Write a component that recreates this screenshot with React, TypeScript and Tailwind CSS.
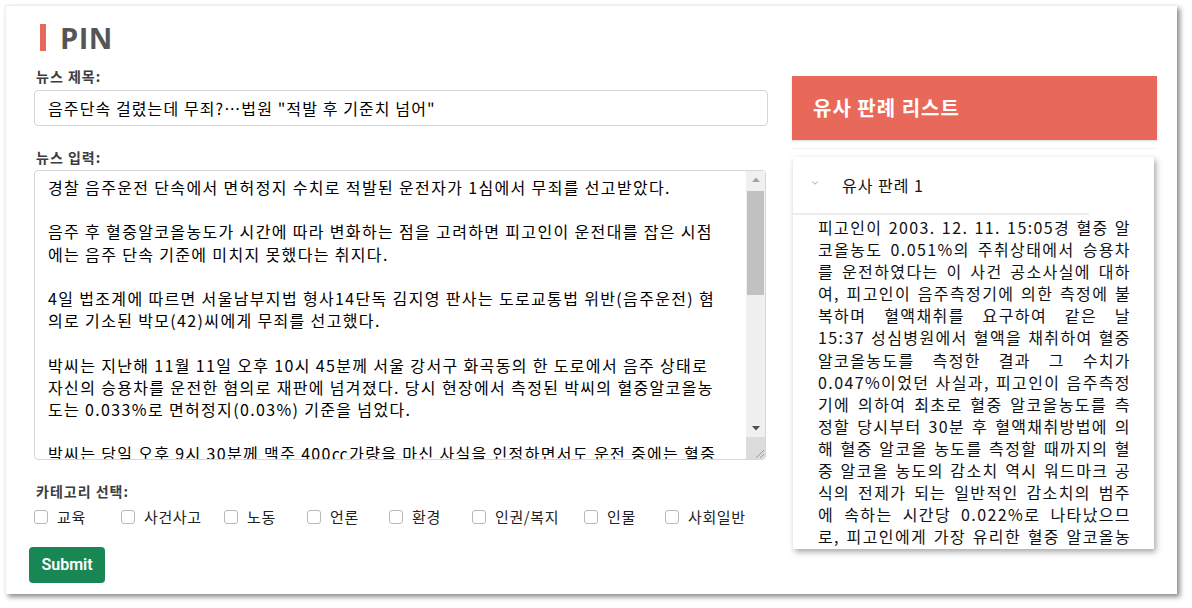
import { ChevronDown } from "lucide-react";

const NEWS_TITLE = '음주단속 걸렸는데 무죄?…법원 "적발 후 기준치 넘어"';

// line breaks kept where the article wraps in the editor
const NEWS_BODY = [
  "경찰 음주운전 단속에서 면허정지 수치로 적발된 운전자가 1심에서 무죄를 선고받았다.",
  "",
  "음주 후 혈중알코올농도가 시간에 따라 변화하는 점을 고려하면 피고인이 운전대를 잡은 시점",
  "에는 음주 단속 기준에 미치지 못했다는 취지다.",
  "",
  "4일 법조계에 따르면 서울남부지법 형사14단독 김지영 판사는 도로교통법 위반(음주운전) 혐",
  "의로 기소된 박모(42)씨에게 무죄를 선고했다.",
  "",
  "박씨는 지난해 11월 11일 오후 10시 45분께 서울 강서구 화곡동의 한 도로에서 음주 상태로",
  "자신의 승용차를 운전한 혐의로 재판에 넘겨졌다. 당시 현장에서 측정된 박씨의 혈중알코올농",
  "도는 0.033%로 면허정지(0.03%) 기준을 넘었다.",
  "",
  "박씨는 당일 오후 9시 30분께 맥주 400㏄가량을 마신 사실을 인정하면서도 운전 중에는 혈중",
  "알코올농도가 상승하는 중이었기 때문에 실제 운전 당시에는 기준치를 넘지 않았다고 주장했다.",
].join("\n");

const CASE_TEXT =
  "피고인이 2003. 12. 11. 15:05경 혈중 알코올농도 0.051%의 주취상태에서 승용차를 운전하였다는 이 사건 공소사실에 대하여, 피고인이 음주측정기에 의한 측정에 불복하며 혈액채취를 요구하여 같은 날 15:37 성심병원에서 혈액을 채취하여 혈중 알코올농도를 측정한 결과 그 수치가 0.047%이었던 사실과, 피고인이 음주측정기에 의하여 최초로 혈중 알코올농도를 측정할 당시부터 30분 후 혈액채취방법에 의해 혈중 알코올 농도를 측정할 때까지의 혈중 알코올 농도의 감소치 역시 워드마크 공식의 전제가 되는 일반적인 감소치의 범주에 속하는 시간당 0.022%로 나타났으므로, 피고인에게 가장 유리한 혈중 알코올농도는 0.051%에서 시간당 감소치를 적용하여 산출하여야 한다.";

const CATEGORIES = [
  { name: "교육", w: "w-[87px]" },
  { name: "사건사고", w: "w-[103px]" },
  { name: "노동", w: "w-[83px]" },
  { name: "언론", w: "w-[82px]" },
  { name: "환경", w: "w-[83px]" },
  { name: "인권/복지", w: "w-[112px]" },
  { name: "인물", w: "w-[81px]" },
  { name: "사회일반", w: "w-[90px]" },
];

// classic scrollbar look drawn over the textarea (the screenshot browser hides real ones)
function FakeScrollbar() {
  return (
    <div className="absolute top-[1px] right-[1px] bottom-[1px] w-[19px] bg-[#f0f0f0] flex flex-col pointer-events-none">
      <div className="h-[17px] flex items-center justify-center">
        <svg width="8" height="5" viewBox="0 0 8 5">
          <polygon points="0,5 4,0.5 8,5" fill="#a3a3a3" />
        </svg>
      </div>
      <div className="mt-[3px] mx-[1px] h-[104px] bg-[#c1c1c1]" />
      <div className="flex-1" />
      <div className="h-[17px] flex items-center justify-center">
        <svg width="8" height="5" viewBox="0 0 8 5">
          <polygon points="0,0 8,0 4,4.5" fill="#505050" />
        </svg>
      </div>
      <div className="h-[22px] bg-[#dcdcdc] flex items-end justify-end">
        <svg width="11" height="11" viewBox="0 0 11 11">
          <line x1="2" y1="10" x2="10" y2="2" stroke="#9a9a9a" strokeWidth="1" />
          <line x1="6" y1="10" x2="10" y2="6" stroke="#9a9a9a" strokeWidth="1" />
        </svg>
      </div>
    </div>
  );
}

export default function App() {
  return (
    <div className="min-h-screen bg-white p-[5px] font-['Noto_Sans_CJK_KR','Noto_Sans',sans-serif]">
      <div className="w-[1172px] h-[589px] bg-white border-t border-l border-[#eeeeee] shadow-[3px_3px_5px_rgba(0,0,0,0.45)] pl-[23px] pr-[20px] pt-[14px] flex gap-[24px]">
        {/* left: form */}
        <div className="w-[739px] flex flex-col">
          <div className="flex items-center h-[34px] ml-[11px]">
            <div className="w-[6px] h-[27px] bg-[#e8695a]" />
            <h1 className="ml-[14px] text-[29px] leading-none font-bold text-[#555555] font-['Open_Sans',sans-serif] tracking-[0.5px]">
              PIN
            </h1>
          </div>

          <label className="mt-[13px] ml-[7px] text-[14px] leading-[18px] font-bold tracking-[1px] text-[#3d3d3d]">
            뉴스 제목:
          </label>
          <input
            className="mt-[5px] ml-[5px] w-[734px] h-[36px] rounded-[4px] border border-[#d3d6da] px-[13px] text-[16px] tracking-[1.1px] text-black outline-none"
            defaultValue={NEWS_TITLE}
            readOnly
          />

          <label className="mt-[22px] ml-[7px] text-[14px] leading-[18px] font-bold tracking-[1px] text-[#3d3d3d]">
            뉴스 입력:
          </label>
          <div className="relative mt-[4px] ml-[5px] w-[732px] h-[290px]">
            <textarea
              className="block w-full h-full rounded-[4px] border border-[#d3d6da] pl-[13px] pr-[21px] pt-[5px] text-[16px] leading-[22.2px] tracking-[1.35px] text-black outline-none resize-none overflow-y-scroll"
              defaultValue={NEWS_BODY}
              readOnly
            />
            <FakeScrollbar />
          </div>

          <div className="mt-[22px] ml-[7px] text-[14px] leading-[18px] font-bold tracking-[1px] text-[#3d3d3d]">
            카테고리 선택:
          </div>
          <div className="mt-[7px] ml-[5px] flex items-center h-[20px]">
            {CATEGORIES.map((c) => (
              <label key={c.name} className={`${c.w} flex items-center gap-[9px] shrink-0`}>
                <span className="w-[14px] h-[14px] rounded-[3px] border border-[#b9b9b9] bg-white shrink-0" />
                <span className="text-[15px] leading-[20px] tracking-[0.6px] text-[#222222]">{c.name}</span>
              </label>
            ))}
          </div>

          <button className="mt-[20px] w-[76px] h-[36px] rounded-[4px] bg-[#198754] text-white text-[16px] font-semibold font-['Roboto',sans-serif]">
            Submit
          </button>
        </div>

        {/* right: similar cases */}
        <div className="w-[366px] flex flex-col pt-[56px]">
          <div className="h-[64px] bg-[#e8695a] flex items-center pl-[21px] shadow-[0_1px_2px_rgba(0,0,0,0.15)]">
            <h2 className="text-[20px] font-bold tracking-[1px] text-white">유사 판례 리스트</h2>
          </div>
          <div className="mt-[8px] h-px w-[364px] bg-[#f2f2f2]" />

          <div className="mt-[8px] ml-[1px] w-[361px] h-[392px] bg-white shadow-[2px_3px_6px_rgba(0,0,0,0.35)] overflow-hidden flex flex-col">
            <div className="h-[56px] flex items-center pl-[17px] shrink-0">
              <ChevronDown size={10} strokeWidth={1.5} className="text-[#6b7280] -mt-[5px]" />
              <span className="ml-[22px] text-[16px] tracking-[1px] text-[#111111]">유사 판례 1</span>
            </div>
            <div className="h-[2px] w-[296px] bg-[#ececec] shrink-0" />
            <p className="pl-[25px] pr-[23px] pt-[1px] text-[16px] leading-[22.1px] tracking-[1.4px] text-[#111111] text-justify">
              {CASE_TEXT}
            </p>
          </div>
        </div>
      </div>
    </div>
  );
}
